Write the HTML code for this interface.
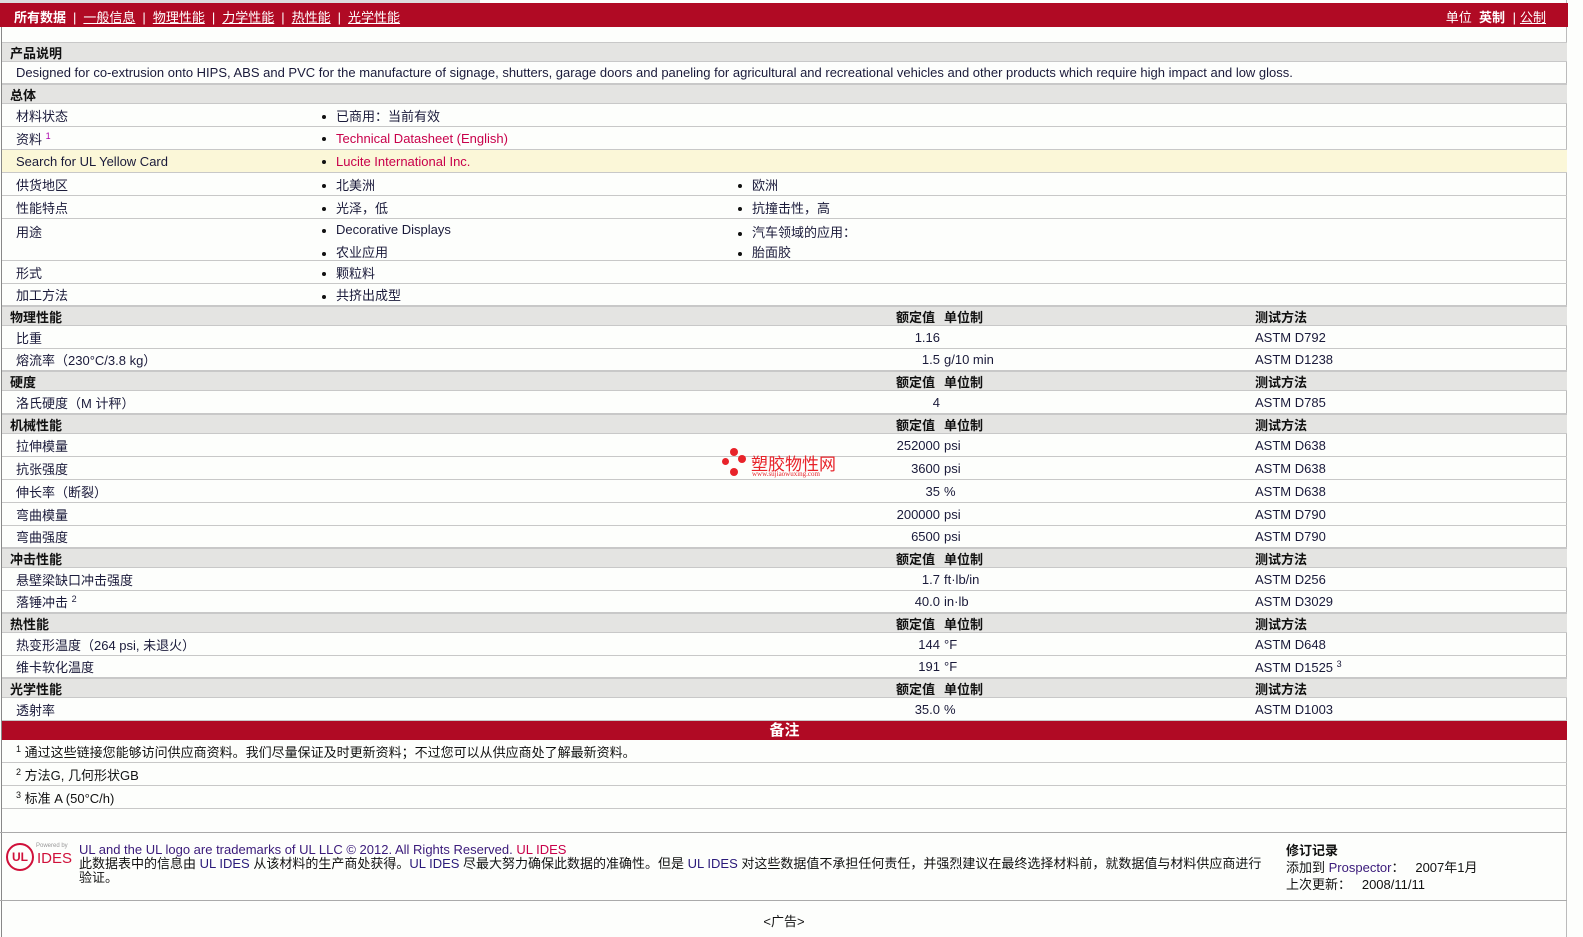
<!DOCTYPE html>
<html><head><meta charset="utf-8">
<style>
*{margin:0;padding:0;box-sizing:border-box}
body{width:1583px;height:937px;background:#fdfefc;font-family:"Liberation Sans","Noto Sans CJK SC",sans-serif;font-size:13px;color:#1a1a3a;position:relative;overflow:hidden}
.frame{position:absolute;left:1px;top:0;width:1566px;height:937px;border-left:1px solid #888;border-right:1px solid #bbb}
.top{position:absolute;left:0;top:3px;width:1568px;height:24px;background:#b00a24;color:#fff;font-size:13px}
.tabs{position:absolute;left:0;top:0;width:480px;height:3px;background:#ddd}
.top .l{position:absolute;left:14px;top:4px;white-space:nowrap}
.top .l b{font-weight:bold}
.top u{text-decoration:underline}
.top .sep{margin:0 7px}
.top .r{position:absolute;right:22px;top:4px;white-space:nowrap}
.row{position:absolute;left:2px;width:1565px;border-bottom:1px solid #c8c8c8;display:flex;align-items:center}
.sec{background:#e4e4e2;font-weight:bold;color:#111;border-top:1px solid #c8c8c8}
.row span{position:absolute;white-space:nowrap}
.lab{left:14px}.secl{left:8px}
.b1{left:320px}.b2{left:736px}
.dot{display:inline-block;width:4px;height:4px;border-radius:50%;background:#111;margin-right:10px;vertical-align:middle}
.v{right:627px;text-align:right}
.u{left:942px}.m{left:1253px}
.h1{left:894px}.h2{left:942px}.h3{left:1253px}
.lk{color:#c8004a}
sup{font-size:9px;vertical-align:5px}
.note{position:absolute;left:2px;top:721px;width:1565px;height:19px;background:#b00a24;color:#fff;font-size:15px;font-weight:bold;text-align:center;line-height:19px}
.ft{position:absolute;left:0;width:1567px;border-top:1px solid #aaa}
</style></head><body>
<div class="frame"></div>
<div class="tabs"></div>
<div class="top"><div class="l"><b>所有数据</b><span class="sep">|</span><u>一般信息</u><span class="sep">|</span><u>物理性能</u><span class="sep">|</span><u>力学性能</u><span class="sep">|</span><u>热性能</u><span class="sep">|</span><u>光学性能</u></div>
<div class="r">单位 &nbsp;<b>英制</b> <span style="margin:0 4px">|</span><u>公制</u></div></div>

<div class="row sec" style="top:42px;height:20px"><span class="secl">产品说明</span></div>
<div class="row" style="top:62px;height:22px"><span class="lab">Designed for co-extrusion onto HIPS, ABS and PVC for the manufacture of signage, shutters, garage doors and paneling for agricultural and recreational vehicles and other products which require high impact and low gloss.</span></div>
<div class="row sec" style="top:84px;height:20px"><span class="secl">总体</span></div>
<div class="row" style="top:104px;height:23px"><span class="lab">材料状态</span><span class="b1"><i class="dot"></i>已商用：当前有效</span></div>
<div class="row" style="top:127px;height:23px"><span class="lab">资料 <sup class="lk" style="color:#a0a">1</sup></span><span class="b1"><i class="dot"></i><span class="lk" style="position:static">Technical Datasheet (English)</span></span></div>
<div class="row" style="top:150px;height:23px;background:#fbf7d8"><span class="lab">Search for UL Yellow Card</span><span class="b1"><i class="dot"></i><span class="lk" style="position:static">Lucite International Inc.</span></span></div>
<div class="row" style="top:173px;height:23px"><span class="lab">供货地区</span><span class="b1"><i class="dot"></i>北美洲</span><span class="b2"><i class="dot"></i>欧洲</span></div>
<div class="row" style="top:196px;height:23px"><span class="lab">性能特点</span><span class="b1"><i class="dot"></i>光泽，低</span><span class="b2"><i class="dot"></i>抗撞击性，高</span></div>
<div class="row" style="top:219px;height:42px"><span class="lab" style="top:3px">用途</span><span class="b1" style="top:3px"><i class="dot"></i>Decorative Displays</span><span class="b1" style="top:23px"><i class="dot"></i>农业应用</span><span class="b2" style="top:3px"><i class="dot"></i>汽车领域的应用：</span><span class="b2" style="top:23px"><i class="dot"></i>胎面胶</span></div>
<div class="row" style="top:261px;height:23px"><span class="lab">形式</span><span class="b1"><i class="dot"></i>颗粒料</span></div>
<div class="row" style="top:284px;height:22px"><span class="lab">加工方法</span><span class="b1"><i class="dot"></i>共挤出成型</span></div>

<div class="row sec" style="top:306px;height:20px"><span class="secl">物理性能</span><span class="h1">额定值</span><span class="h2">单位制</span><span class="h3">测试方法</span></div>
<div class="row" style="top:326px;height:23px"><span class="lab">比重</span><span class="v">1.16</span><span class="m">ASTM D792</span></div>
<div class="row" style="top:349px;height:22px"><span class="lab">熔流率（230°C/3.8 kg）</span><span class="v">1.5</span><span class="u">g/10 min</span><span class="m">ASTM D1238</span></div>
<div class="row sec" style="top:371px;height:20px"><span class="secl">硬度</span><span class="h1">额定值</span><span class="h2">单位制</span><span class="h3">测试方法</span></div>
<div class="row" style="top:391px;height:23px"><span class="lab">洛氏硬度（M 计秤）</span><span class="v">4</span><span class="m">ASTM D785</span></div>
<div class="row sec" style="top:414px;height:20px"><span class="secl">机械性能</span><span class="h1">额定值</span><span class="h2">单位制</span><span class="h3">测试方法</span></div>
<div class="row" style="top:434px;height:23px"><span class="lab">拉伸模量</span><span class="v">252000</span><span class="u">psi</span><span class="m">ASTM D638</span></div>
<div class="row" style="top:457px;height:23px"><span class="lab">抗张强度</span><span class="v">3600</span><span class="u">psi</span><span class="m">ASTM D638</span></div>
<div class="row" style="top:480px;height:23px"><span class="lab">伸长率（断裂）</span><span class="v">35</span><span class="u">%</span><span class="m">ASTM D638</span></div>
<div class="row" style="top:503px;height:23px"><span class="lab">弯曲模量</span><span class="v">200000</span><span class="u">psi</span><span class="m">ASTM D790</span></div>
<div class="row" style="top:526px;height:22px"><span class="lab">弯曲强度</span><span class="v">6500</span><span class="u">psi</span><span class="m">ASTM D790</span></div>
<div class="row sec" style="top:548px;height:20px"><span class="secl">冲击性能</span><span class="h1">额定值</span><span class="h2">单位制</span><span class="h3">测试方法</span></div>
<div class="row" style="top:568px;height:23px"><span class="lab">悬壁梁缺口冲击强度</span><span class="v">1.7</span><span class="u">ft·lb/in</span><span class="m">ASTM D256</span></div>
<div class="row" style="top:591px;height:22px"><span class="lab">落锤冲击 <sup>2</sup></span><span class="v">40.0</span><span class="u">in·lb</span><span class="m">ASTM D3029</span></div>
<div class="row sec" style="top:613px;height:20px"><span class="secl">热性能</span><span class="h1">额定值</span><span class="h2">单位制</span><span class="h3">测试方法</span></div>
<div class="row" style="top:633px;height:23px"><span class="lab">热变形温度（264 psi, 未退火）</span><span class="v">144</span><span class="u">°F</span><span class="m">ASTM D648</span></div>
<div class="row" style="top:656px;height:22px"><span class="lab">维卡软化温度</span><span class="v">191</span><span class="u">°F</span><span class="m">ASTM D1525 <sup>3</sup></span></div>
<div class="row sec" style="top:678px;height:20px"><span class="secl">光学性能</span><span class="h1">额定值</span><span class="h2">单位制</span><span class="h3">测试方法</span></div>
<div class="row" style="top:698px;height:23px"><span class="lab">透射率</span><span class="v">35.0</span><span class="u">%</span><span class="m">ASTM D1003</span></div>
<div class="note">备注</div>
<div class="row" style="top:740px;height:23px;color:#111"><span class="lab"><sup>1</sup> 通过这些链接您能够访问供应商资料。我们尽量保证及时更新资料；不过您可以从供应商处了解最新资料。</span></div>
<div class="row" style="top:763px;height:23px;color:#111"><span class="lab"><sup>2</sup> 方法G, 几何形状GB</span></div>
<div class="row" style="top:786px;height:23px;color:#111"><span class="lab"><sup>3</sup> 标准 A (50°C/h)</span></div>

<div style="position:absolute;left:722px;top:446px;width:130px;height:36px">
<i style="position:absolute;left:8px;top:2px;width:8px;height:8px;border-radius:50%;background:#e8232a"></i>
<i style="position:absolute;left:16px;top:9px;width:8px;height:8px;border-radius:50%;background:#e8232a"></i>
<i style="position:absolute;left:0;top:12px;width:7px;height:7px;border-radius:50%;background:#e8232a"></i>
<i style="position:absolute;left:8px;top:22px;width:8px;height:8px;border-radius:50%;background:#e8232a"></i>
<span style="position:absolute;left:29px;top:4px;color:#e8232a;font-size:17px;white-space:nowrap">塑胶物性网</span>
<span style="position:absolute;left:30px;top:24px;color:#e8232a;font-size:7px;white-space:nowrap;font-family:'Liberation Serif',serif">www.sujiaowuxing.com</span>
</div>

<div class="ft" style="top:832px"></div>
<div style="position:absolute;left:6px;top:843px;width:28px;height:28px;border:2px solid #d0103a;border-radius:50%;color:#d0103a;font-weight:bold;font-size:12px;text-align:center;line-height:24px">UL</div>
<div style="position:absolute;left:36px;top:843px;color:#999;font-size:6px">Powered by</div>
<div style="position:absolute;left:37px;top:850px;color:#d0103a;font-size:15px">IDES</div>
<div style="position:absolute;left:79px;top:843px;width:1190px;line-height:14px;color:#111">
<span style="color:#3a1a7a">UL and the UL logo are trademarks of UL LLC © 2012. All Rights Reserved.</span> <span class="lk">UL IDES</span><br>
此数据表中的信息由 <span style="color:#2a1a7a">UL IDES</span> 从该材料的生产商处获得。<span style="color:#2a1a7a">UL IDES</span> 尽最大努力确保此数据的准确性。但是 <span style="color:#2a1a7a">UL IDES</span> 对这些数据值不承担任何责任，并强烈建议在最终选择材料前，就数据值与材料供应商进行验证。</div>
<div style="position:absolute;left:1286px;top:842px;line-height:17px;color:#111;white-space:nowrap"><b>修订记录</b><br>添加到 <span style="color:#3a1a7a">Prospector</span>： &nbsp; 2007年1月<br>上次更新： &nbsp; 2008/11/11</div>
<div class="ft" style="top:900px"></div>
<div style="position:absolute;left:0;width:1568px;top:911px;text-align:center;color:#111">&lt;广告&gt;</div>
</body></html>
